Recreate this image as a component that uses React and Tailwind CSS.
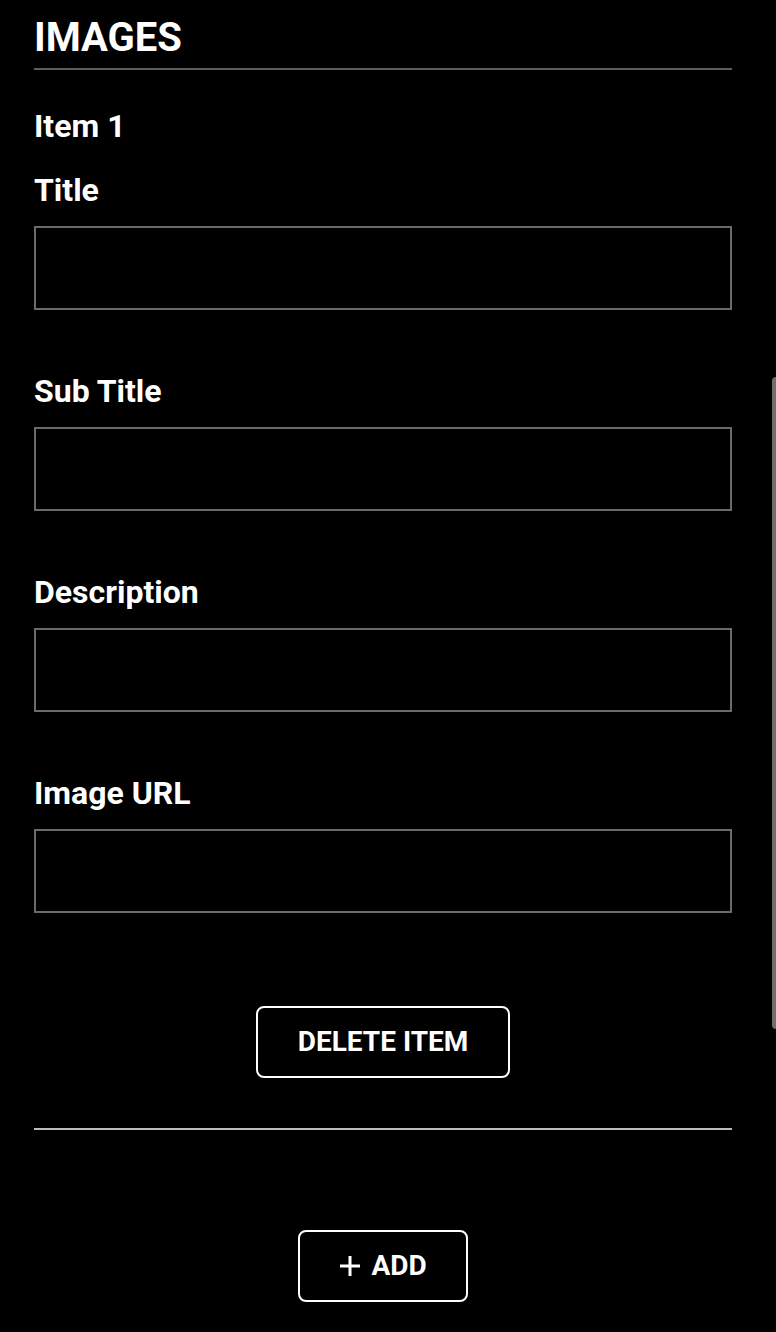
import React from 'react';

const fields = ['Title', 'Sub Title', 'Description', 'Image URL'];

function Field({ label, first }) {
  return (
    <div className={first ? 'mt-[26px]' : 'mt-[62px]'}>
      <label className="block text-[32px] leading-[38px] font-bold text-white">{label}</label>
      <div className="mt-[17px] h-[84px] border-2 border-[#6b6b6b] bg-black" />
    </div>
  );
}

export default function App() {
  return (
    <div
      className="relative min-h-[1332px] bg-black pl-[34px] pr-[44px] pt-[14px] text-white"
      style={{ fontFamily: 'Roboto, "Noto Sans", sans-serif' }}
    >
      <h1 className="text-[40px] leading-[47px] font-bold">IMAGES</h1>
      <div className="mt-[7px] h-[2px] bg-[#5c5c5c]" />

      <h2 className="mt-[37px] text-[32px] leading-[38px] font-bold">Item 1</h2>

      {fields.map((f, i) => (
        <Field key={f} label={f} first={i === 0} />
      ))}

      <div className="mt-[93px] flex justify-center">
        <button className="h-[72px] w-[254px] rounded-[8px] border-2 border-white text-[28px] font-bold">
          DELETE ITEM
        </button>
      </div>

      <div className="mt-[50px] h-[2px] bg-[#bdbdbd]" />

      <div className="mt-[100px] flex justify-center">
        <button className="flex h-[72px] w-[170px] items-center justify-center gap-[10px] rounded-[8px] border-2 border-white text-[28px] font-bold">
          <svg width="22" height="22" viewBox="0 0 22 22" stroke="white" strokeWidth="3">
            <path d="M11 1v20M1 11h20" />
          </svg>
          ADD
        </button>
      </div>

      {/* scroll indicator */}
      <div className="absolute right-0 top-[377px] h-[652px] w-[4px] rounded-l-full bg-[#6e6e6e]" />
    </div>
  );
}
